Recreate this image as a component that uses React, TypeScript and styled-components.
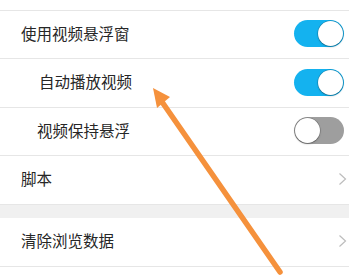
import React from 'react';
import styled, { createGlobalStyle } from 'styled-components';

const GlobalStyle = createGlobalStyle`
  html, body {
    margin: 0;
    padding: 0;
    background: #ffffff;
  }
  body {
    font-family: "Noto Sans CJK SC", "Noto Sans", sans-serif;
  }
`;

const Page = styled.div`
  position: relative;
  width: 349px;
  height: 278px;
  overflow: hidden;
  background: #ffffff;
  padding-top: 10px;
  box-sizing: border-box;
`;

const Group = styled.div<{ $noTop?: boolean }>`
  border-top: ${p => (p.$noTop ? 'none' : '1px solid #e6e6e6')};
  border-bottom: 1px solid #e6e6e6;
`;

const Row = styled.div<{ $indent?: number; $h?: number }>`
  display: flex;
  align-items: center;
  justify-content: space-between;
  height: ${p => p.$h ?? 48}px;
  padding-left: ${p => p.$indent ?? 21}px;
  padding-right: 5px;
  padding-bottom: 2px;
  box-sizing: border-box;
  & + & {
    border-top: 1px solid #e6e6e6;
  }
`;

const Label = styled.span`
  font-size: 15.5px;
  color: #262626;
  line-height: 1;
`;

const Gap = styled.div`
  height: 13px;
  background: #f0f0f0;
`;

const Track = styled.div<{ $on: boolean }>`
  position: relative;
  width: 50px;
  height: 27px;
  border-radius: 14px;
  background: ${p => (p.$on ? '#14b2ef' : '#9e9e9e')};
  flex-shrink: 0;
`;

const Thumb = styled.div<{ $on: boolean }>`
  position: absolute;
  top: 1px;
  left: ${p => (p.$on ? '24px' : '1px')};
  width: 25px;
  height: 25px;
  border-radius: 50%;
  background: #ffffff;
  box-shadow: 0 0 0 0.5px rgba(0, 0, 0, 0.25), 0 1px 2px rgba(0, 0, 0, 0.25);
`;

const Chevron = styled.svg`
  width: 9px;
  height: 14px;
  margin-right: -3px;
  flex-shrink: 0;
`;

const Overlay = styled.svg`
  position: absolute;
  left: 0;
  top: 0;
  pointer-events: none;
`;

const Toggle: React.FC<{ on: boolean }> = ({ on }) => (
  <Track $on={on}>
    <Thumb $on={on} />
  </Track>
);

const Arrow = () => (
  <Chevron viewBox="0 0 9 14">
    <path d="M1.5 1.5 L7.5 7 L1.5 12.5" fill="none" stroke="#bdbdbd" strokeWidth="1.2" />
  </Chevron>
);

export default function App() {
  return (
    <>
      <GlobalStyle />
      <Page>
        <Group>
          <Row $h={47}>
            <Label>使用视频悬浮窗</Label>
            <Toggle on />
          </Row>
          <Row $h={49} $indent={39}>
            <Label>自动播放视频</Label>
            <Toggle on />
          </Row>
          <Row $h={48} $indent={37}>
            <Label>视频保持悬浮</Label>
            <Toggle on={false} />
          </Row>
          <Row $h={49}>
            <Label>脚本</Label>
            <Arrow />
          </Row>
        </Group>
        <Gap />
        <Group $noTop>
          <Row $h={48}>
            <Label>清除浏览数据</Label>
            <Arrow />
          </Row>
        </Group>
        <Overlay width="349" height="278" viewBox="0 0 349 278">
          <line x1="160" y1="99" x2="280" y2="272" stroke="#f5913c" strokeWidth="5.5" strokeLinecap="round" />
          <polygon points="153,88 170,97 157,108" fill="#f5913c" />
        </Overlay>
      </Page>
    </>
  );
}
